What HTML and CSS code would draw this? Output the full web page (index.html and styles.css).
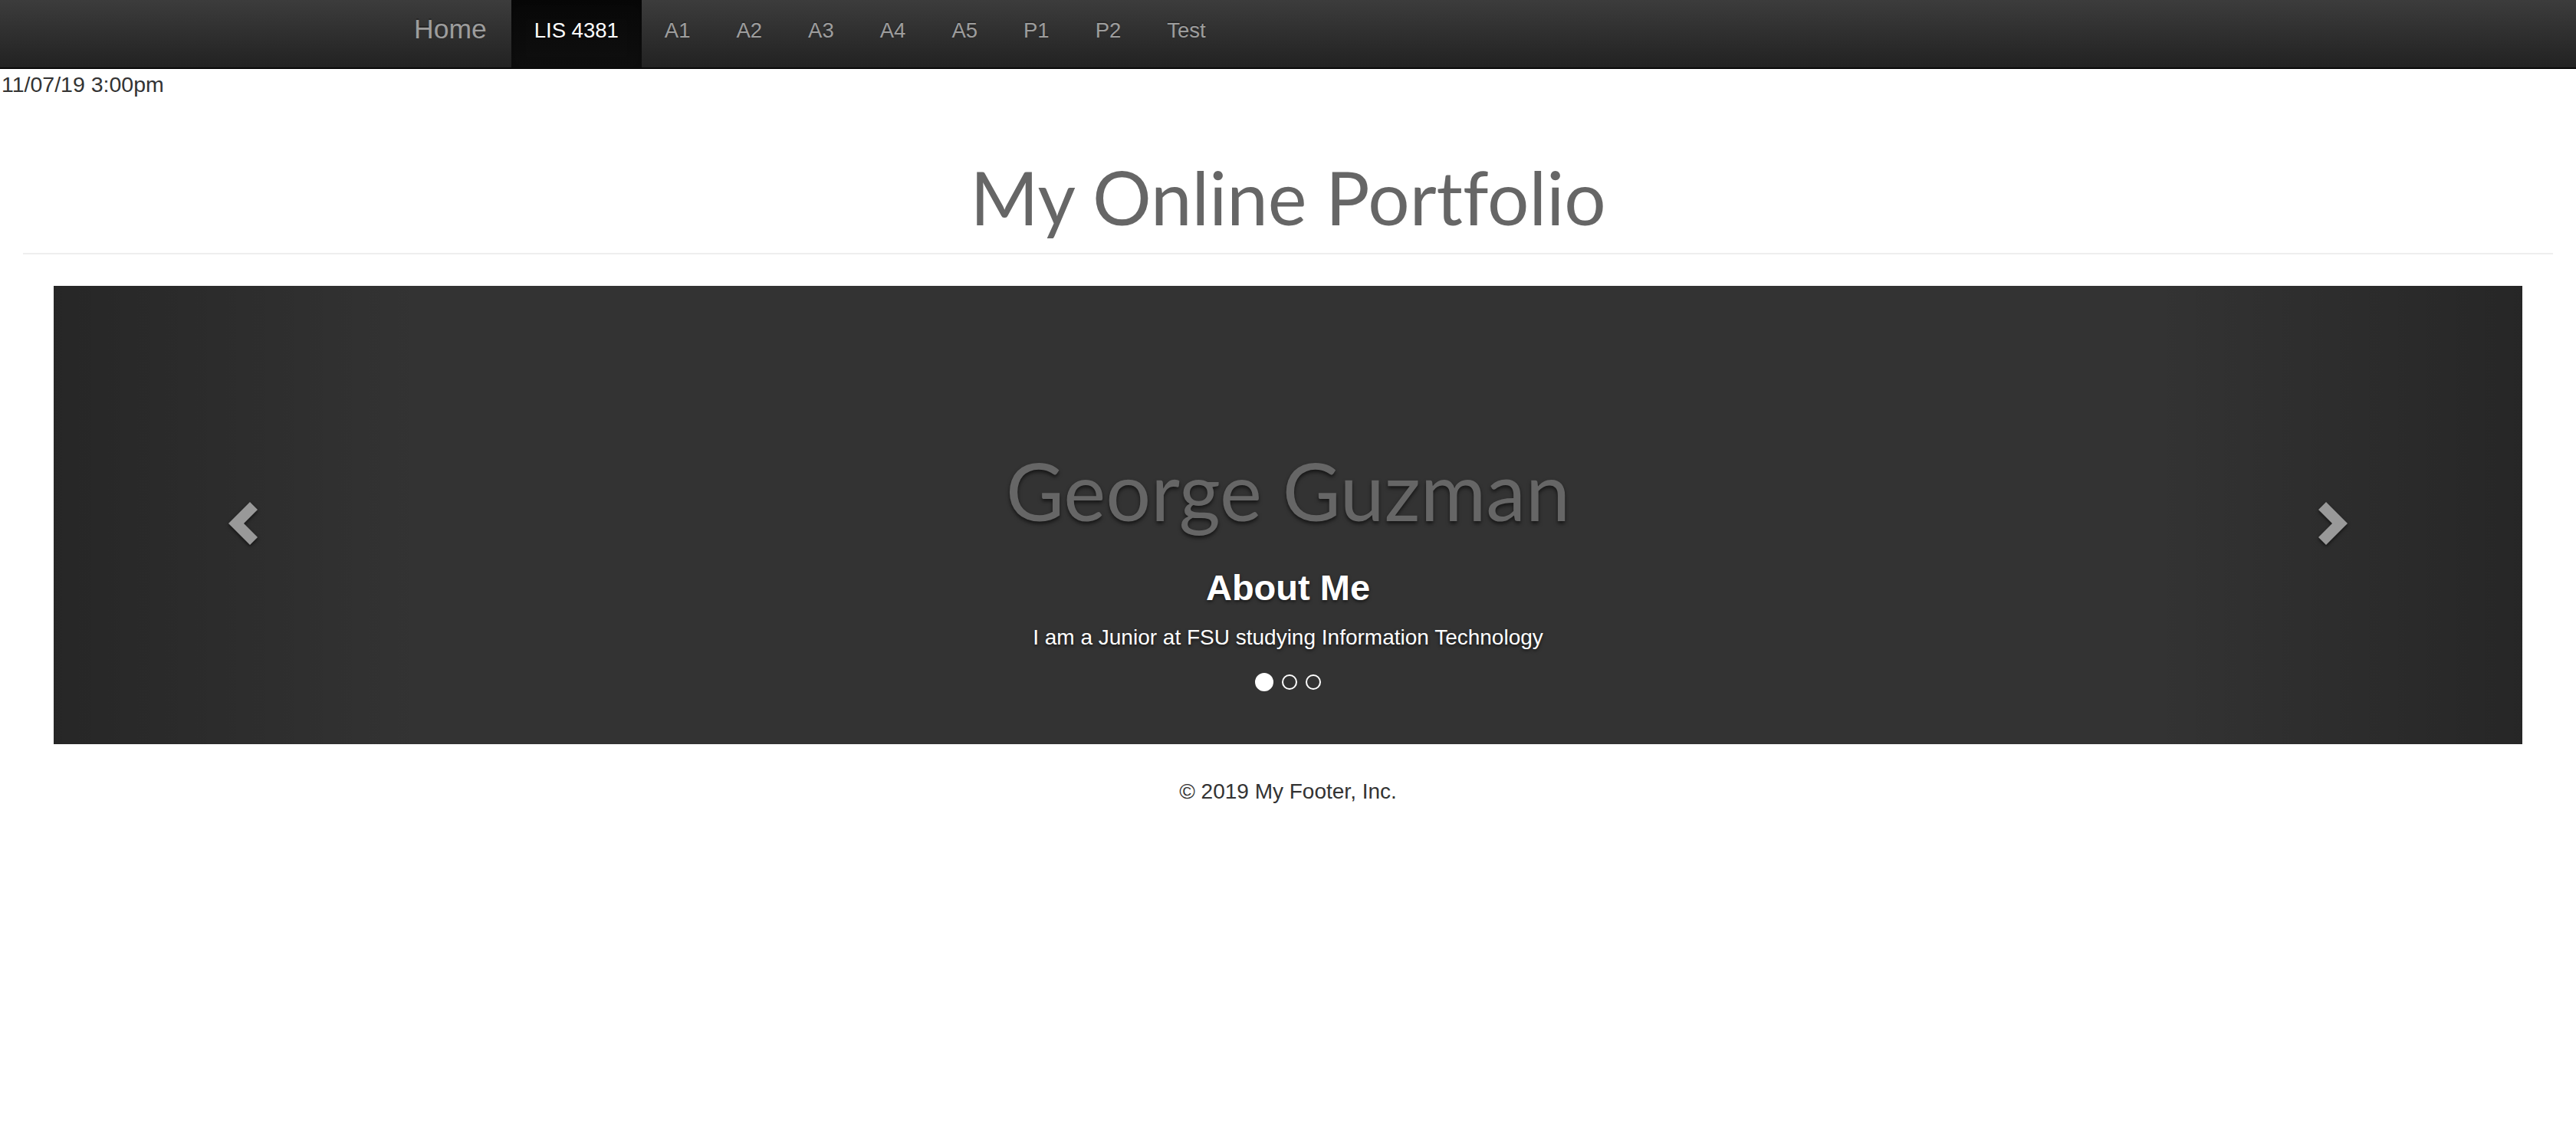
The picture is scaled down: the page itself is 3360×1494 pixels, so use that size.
FILE: index.html
```html
<!DOCTYPE html>
<html lang="en">
<head>
<meta charset="utf-8">
<title>My Online Portfolio</title>
<link rel="stylesheet" href="styles.css">
</head>
<body>
<nav class="navbar">
  <div class="nav-container">
    <a class="brand" href="#">Home</a>
    <ul class="nav">
      <li class="active"><a href="#">LIS 4381</a></li>
      <li><a href="#">A1</a></li>
      <li><a href="#">A2</a></li>
      <li><a href="#">A3</a></li>
      <li><a href="#">A4</a></li>
      <li><a href="#">A5</a></li>
      <li><a href="#">P1</a></li>
      <li><a href="#">P2</a></li>
      <li><a href="#">Test</a></li>
    </ul>
  </div>
</nav>
<div class="datetime">11/07/19 3:00pm</div>
<div class="page">
  <div class="page-header">
    <h1>My Online Portfolio</h1>
  </div>
  <div class="carousel">
    <div class="item">
      <h2>George Guzman</h2>
      <div class="caption">
        <h3>About Me</h3>
        <p>I am a Junior at FSU studying Information Technology</p>
      </div>
      <ol class="indicators">
        <li class="on"></li>
        <li></li>
        <li></li>
      </ol>
    </div>
    <a class="control left" href="#">
      <svg class="chev" width="38" height="56" viewBox="0 0 38 56"><polygon points="0,28 28,0 38,10 20,28 38,46 28,56"/></svg>
    </a>
    <a class="control right" href="#">
      <svg class="chev" width="38" height="56" viewBox="0 0 38 56"><polygon points="38,28 10,0 0,10 18,28 0,46 10,56"/></svg>
    </a>
  </div>
  <footer class="footer">
    <p>&copy; 2019 My Footer, Inc.</p>
  </footer>
</div>
</body>
</html>
```

FILE: styles.css
```css
* {
  box-sizing: border-box;
}

html,
body {
  margin: 0;
  padding: 0;
  background: #fff;
}

body {
  font-family: "Liberation Sans", Arial, Helvetica, sans-serif;
  font-size: 28px;
  line-height: 40px;
  color: #333;
}

/* Navbar */
.navbar {
  height: 90px;
  background: linear-gradient(to bottom, #3c3c3c 0, #222 100%);
  border-bottom: 2px solid #080808;
}

.nav-container {
  width: 2340px;
  margin: 0 auto;
  padding: 0 30px;
  display: flex;
  height: 88px;
}

.brand {
  display: block;
  height: 88px;
  margin-left: -30px;
  padding: 18px 32px 30px 30px;
  font-size: 35.5px;
  line-height: 40px;
  color: #9d9d9d;
  text-decoration: none;
  text-shadow: 0 -2px 0 rgba(0, 0, 0, 0.25);
}

.nav {
  list-style: none;
  margin: 0;
  padding: 0;
  display: flex;
}

.nav a {
  display: block;
  height: 88px;
  padding: 20px 30px 28px;
  font-size: 27.5px;
  line-height: 40px;
  color: #9d9d9d;
  text-decoration: none;
  text-shadow: 0 -2px 0 rgba(0, 0, 0, 0.25);
}

.nav .active a {
  color: #fff;
  background: linear-gradient(to bottom, #080808 0, #0f0f0f 100%);
  box-shadow: inset 0 6px 18px rgba(0, 0, 0, 0.25);
}

/* Date */
.datetime {
  font-size: 28.5px;
  line-height: 40px;
  padding-left: 2px;
  color: #333;
}

/* Page */
.page {
  padding: 0 30px;
}

.page-header {
  margin-top: 74px;
  padding-bottom: 20px;
  border-bottom: 2px solid #eee;
}

.page-header h1 {
  margin: 0;
  font-family: "Trebuchet MS", Lato, sans-serif;
  font-size: 96px;
  line-height: 106px;
  font-weight: normal;
  color: #666;
  text-align: center;
  font-variant-ligatures: none;
}

/* Carousel */
.carousel {
  position: relative;
  margin: 41px 40px 0;
  height: 598px;
  background: #333;
  text-align: center;
  overflow: hidden;
}

.item h2 {
  margin: 0;
  padding-top: 210px;
  font-family: "Trebuchet MS", Lato, sans-serif;
  font-size: 104px;
  line-height: 114px;
  font-weight: normal;
  color: #666;
  text-shadow: 0 3px 5px rgba(0, 0, 0, 0.6);
  font-variant-ligatures: none;
}

.caption {
  color: #fff;
  text-shadow: 0 2px 4px rgba(0, 0, 0, 0.6);
}

.caption h3 {
  margin: 44px 0 0;
  font-size: 47px;
  line-height: 52px;
  font-weight: bold;
}

.caption p {
  margin: 19px 0 0;
  font-size: 28px;
  line-height: 40px;
}

.indicators {
  list-style: none;
  margin: 26px 0 0;
  padding: 0;
  height: 24px;
  display: flex;
  justify-content: center;
  align-items: center;
  gap: 11px;
}

.indicators li {
  width: 20px;
  height: 20px;
  border: 2px solid #fff;
  border-radius: 50%;
}

.indicators li.on {
  width: 24px;
  height: 24px;
  background: #fff;
}

.control {
  position: absolute;
  top: 0;
  bottom: 0;
  width: 15%;
}

.control.left {
  left: 0;
  background: linear-gradient(to right, rgba(0, 0, 0, 0.25) 0, rgba(0, 0, 0, 0) 100%);
}

.control.right {
  right: 0;
  background: linear-gradient(to left, rgba(0, 0, 0, 0.25) 0, rgba(0, 0, 0, 0) 100%);
}

.chev {
  position: absolute;
  top: 282px;
  fill: #999;
  filter: drop-shadow(0 2px 2px rgba(0, 0, 0, 0.6));
}

.control.left .chev {
  left: 228px;
}

.control.right .chev {
  right: 228px;
}

/* Footer */
.footer {
  margin-top: 42px;
  text-align: center;
}

.footer p {
  margin: 0;
  font-size: 28px;
  line-height: 40px;
  color: #333;
}
```
